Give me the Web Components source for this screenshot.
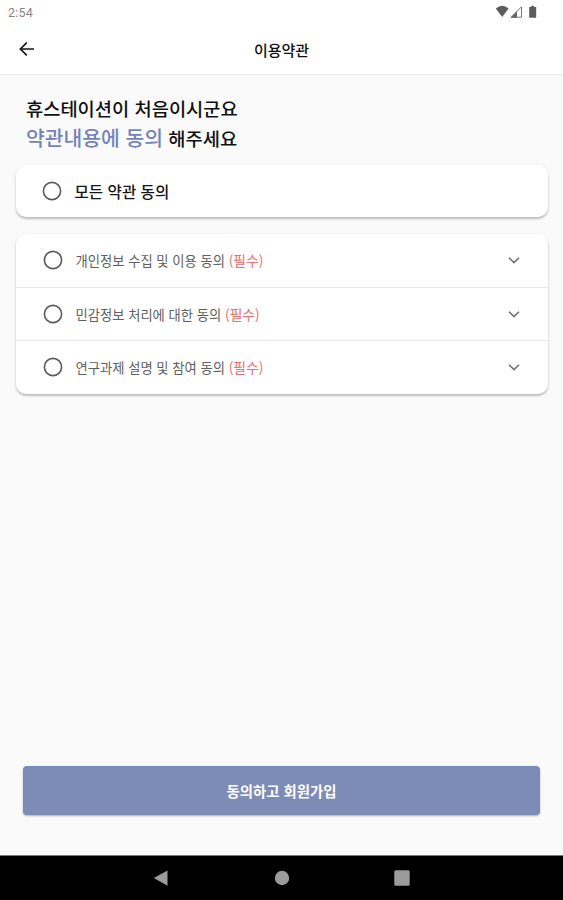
<!DOCTYPE html>
<html lang="ko">
<head>
<meta charset="utf-8">
<title>이용약관</title>
<style>
html,body{margin:0;height:100%}
body{font-family:"Noto Sans CJK KR","Noto Sans",sans-serif;color:#111;background:#fafafa;overflow:hidden}
</style>
</head>
<body>
<terms-screen></terms-screen>
<script>
const define = (name, html) => customElements.define(name, class extends HTMLElement {
  constructor() {
    super();
    const t = document.createElement('template');
    t.innerHTML = html;
    this.attachShadow({mode: 'open'}).append(t.content.cloneNode(true));
  }
});

define('status-bar', `
<style>
:host{display:flex;height:24px;align-items:center;justify-content:space-between;padding:0 20px 0 8px;box-sizing:border-box;background:#fff;color:#858585;font:12.5px/24px Roboto,sans-serif}
span{padding-top:1px;letter-spacing:.2px}
svg{display:block}
</style>
<span>2:54</span>
<svg width="48" height="24" viewBox="0 0 48 24">
  <path d="M0.8 8.5Q7.2 3 13.6 8.5L7.2 17Z" fill="#5c5c5c"/>
  <path d="M16.2 17.2L26.5 6.8V17.2Z" fill="none" stroke="#777" stroke-width="1"/>
  <path d="M15.5 17.7L22 11.2V17.7Z" fill="#666"/>
  <path d="M36.3 5.8H39V6.9H41.2V17.8H34.2V6.9H36.3Z" fill="#5c5c5c"/>
</svg>`);

define('app-bar', `
<style>
:host{display:grid;grid-template-columns:54px 1fr 54px;height:51px;align-items:center;box-sizing:border-box;background:#fff;border-bottom:1px solid #f0f0f0;box-shadow:0 1px 1px rgba(0,0,0,.02)}
svg{display:block;margin-left:18px}
h1{margin:2px 0 0;text-align:center;font-size:15px;line-height:22px;font-weight:500}
</style>
<svg width="18" height="18" viewBox="0 0 18 18" fill="none" stroke="#161616" stroke-width="1.7"><path d="M16 9H2.8M8.8 2.6L2.4 9L8.8 15.4"/></svg>
<h1><slot></slot></h1>`);

define('intro-heading', `
<style>
:host{display:block;padding:18px 26px 0;font-size:18.72px;line-height:29px;font-weight:500;height:71.5px;white-space:nowrap}
div{height:29.5px}
::slotted(b){font-weight:500;font-size:20.4px;color:#7383b9}
</style>
<div><slot name="first"></slot></div><div><slot name="accent"></slot> <slot name="second"></slot></div>`);

define('surface-card', `
<style>
:host{display:block;margin:0 15px 17px 16px;border-radius:10px;background:#fff;box-shadow:0 2px 2px rgba(0,0,0,.2),0 1px 4px rgba(0,0,0,.08)}
</style>
<slot></slot>`);

define('consent-row', `
<style>
:host{display:flex;align-items:center;height:53px;padding:0 27px 0 27px;box-sizing:border-box;font-size:13.3px;color:#606060;white-space:nowrap}
:host([divided]){border-top:1px solid #e8e8e8;height:53.5px}
:host([all]){height:52px;padding-left:26px;font-size:15.6px;font-weight:500;color:#151515}
:host([all]) .down{display:none}
.text{flex:1;margin-left:12.5px;padding-top:1px;line-height:22px}
svg{display:block;flex:none}
::slotted(em){font-style:normal;font-size:13.8px;color:#f36c6c}
</style>
<svg width="20" height="20" viewBox="0 0 20 20"><circle cx="10" cy="10" r="8.6" fill="none" stroke="#5b5b5b" stroke-width="1.6"/></svg>
<span class="text"><slot></slot></span>
<svg class="down" width="14" height="14" viewBox="0 0 14 14"><path d="M2 4.7L7 9.6L12 4.7" fill="none" stroke="#707070" stroke-width="1.6"/></svg>`);

define('primary-button', `
<style>
:host{display:block;margin:auto 23px 40px}
button{display:block;width:100%;height:49px;padding:1px 0 0;border:0;border-radius:4px;background:#7d8cb6;color:#fff;font:bold 14.4px/22px "Noto Sans CJK KR",sans-serif;box-shadow:0 1px 2px rgba(0,0,0,.3)}
</style>
<button><slot></slot></button>`);

define('nav-bar', `
<style>
:host{display:grid;grid-template-columns:repeat(3,120.5px);justify-content:center;justify-items:center;align-items:center;height:45px;box-sizing:border-box;background:#000;border-top:1px solid #777}
svg{display:block;fill:#9b9b9b}
</style>
<svg width="16" height="16" viewBox="0 0 16 16"><path d="M14.5 .5V15.7L.8 8Z"/></svg>
<svg width="16" height="16" viewBox="0 0 16 16"><circle cx="8" cy="8" r="7.2"/></svg>
<svg width="16" height="16" viewBox="0 0 16 16"><rect x=".3" y=".3" width="15.4" height="15.4" rx="1.5"/></svg>`);

define('terms-screen', `
<style>
:host{display:flex;flex-direction:column;height:900px;background:#fafafa}
</style>
<status-bar></status-bar>
<app-bar>이용약관</app-bar>
<intro-heading><span slot="first">휴스테이션이 처음이시군요</span><b slot="accent">약관내용에 동의</b><span slot="second">해주세요</span></intro-heading>
<surface-card><consent-row all>모든 약관 동의</consent-row></surface-card>
<surface-card>
  <consent-row>개인정보 수집 및 이용 동의 <em>(필수)</em></consent-row>
  <consent-row divided>민감정보 처리에 대한 동의 <em>(필수)</em></consent-row>
  <consent-row divided>연구과제 설명 및 참여 동의 <em>(필수)</em></consent-row>
</surface-card>
<primary-button>동의하고 회원가입</primary-button>
<nav-bar></nav-bar>`);
</script>
</body>
</html>
